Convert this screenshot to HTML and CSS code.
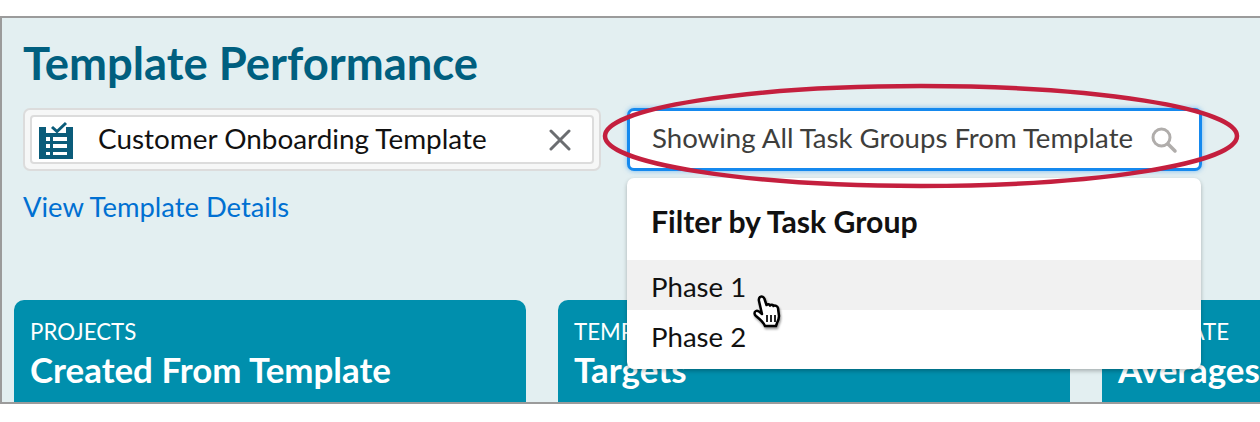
FILE: index.html
```html
<!DOCTYPE html>
<html lang="en">
<head>
<meta charset="utf-8">
<title>Template Performance</title>
<link rel="stylesheet" href="styles.css">
</head>
<body>
<div class="frame">
  <h1 class="title">Template Performance</h1>
  <div class="controls">
    <div class="left-col">
      <div class="picker-outer">
        <div class="picker">
          <svg class="tpl-icon" width="34" height="38" viewBox="0 0 34 38">
            <path fill="#0b5c7a" d="M0 6h7v6h20V6h7v32H0z"/>
            <path fill="none" stroke="#0b5c7a" stroke-width="3" d="M13 6l5 4.500L27 2"/>
            <path fill="#fff" d="M7 16h4v4H7zM14 16h14v4H14zM7 23h4v4H7zM14 23h14v4H14zM7 31h4v3H7zM14 31h14v3H14z"/>
          </svg>
          <span class="picker-text">Customer Onboarding Template</span>
          <svg class="clear-icon" width="22" height="22" viewBox="0 0 22 22">
            <path d="M2 2l18 18M20 2L2 20" stroke="#6b6d70" stroke-width="3" stroke-linecap="round"/>
          </svg>
        </div>
      </div>
      <a class="details-link">View Template Details</a>
    </div>
    <div class="search">
      <span class="search-text">Showing All Task Groups From Template</span>
      <svg class="search-icon" width="28" height="28" viewBox="0 0 28 28">
        <circle cx="11.500" cy="11.500" r="8.500" fill="none" stroke="#b0adab" stroke-width="3"/>
        <path d="M18 18l7 7" stroke="#b0adab" stroke-width="3.500" stroke-linecap="round"/>
      </svg>
    </div>
  </div>
  <div class="cards">
    <div class="card"><div class="eyebrow">PROJECTS</div><div class="card-title">Created From Template</div></div>
    <div class="card"><div class="eyebrow">TEMPLATE</div><div class="card-title">Targets</div></div>
    <div class="card"><div class="eyebrow">TEMPLATE</div><div class="card-title">Averages</div></div>
  </div>
  <div class="menu">
    <div class="menu-head">Filter by Task Group</div>
    <div class="menu-item hover">Phase 1</div>
    <div class="menu-item">Phase 2</div>
  </div>
  <svg class="ellipse" width="642" height="112" viewBox="0 0 642 112">
    <ellipse cx="321" cy="56" rx="316" ry="50" fill="none" stroke="#c41f3e" stroke-width="4.500"/>
  </svg>
  <svg class="hand" width="34" height="37" viewBox="0 0 34 37">
    <path d="M8 3c2-1 4 0 4.500 2l2 6c1-1 3-1 3.500.5 1-1 3-1 3.500.5 1.500-1 4 0 4.500 2l1 8c0 3-1 5-2 7l-1 3H13c-1-3-4-6-9-10-2-2-2-4 0-5 2-1 4 1 6 3L7 7c-.5-2 0-3 1-4z" fill="#fff" stroke="#000" stroke-width="2.500" stroke-linejoin="round"/>
    <path d="M15 21v7M19 21v7M23 21v7" stroke="#000" stroke-width="1.700"/>
  </svg>
</div>
</body>
</html>
```
FILE: styles.css
```css
* { box-sizing: border-box; }
html, body { margin: 0; padding: 0; background: #fff; }
body { font-family: Lato, "Open Sans", sans-serif; height: 422px; overflow: hidden; }
.frame {
  position: relative;
  margin-top: 16px;
  height: 388px;
  overflow: hidden;
  background: #e3eff1;
  border: 2px solid #9b9b9b;
  border-right: 0;
  padding: 22px 0 0 21px;
}
.title {
  margin: 0;
  font-size: 45.400px;
  line-height: 45px;
  font-weight: 700;
  color: #005f7f;
}
.controls {
  display: flex;
  margin-top: 23px;
  gap: 26px;
  align-items: flex-start;
}
.left-col { width: 578px; }
.picker-outer {
  height: 63px;
  padding: 5px;
  background: #f6f7f7;
  border: 2px solid #dcdcdc;
  border-radius: 7px;
}
.picker {
  display: flex;
  align-items: center;
  height: 49px;
  padding: 0 21px 0 7px;
  background: #fff;
  border: 2px solid #dcdcdc;
  border-radius: 4px;
}
.tpl-icon { flex: none; }
.picker-text { flex: 1; margin-left: 25px; font-size: 27.900px; line-height: 44px; margin-top: -3px; color: #111; white-space: nowrap; }
.clear-icon { flex: none; }
.details-link {
  display: block;
  margin-top: 19px;
  font-size: 27.400px;
  line-height: 34px;
  color: #0070d2;
}
.search {
  display: flex;
  align-items: center;
  width: 575px;
  height: 63px;
  padding: 0 21px 0 22px;
  background: #fff;
  border: 3px solid #1589ee;
  border-radius: 7px;
  box-shadow: 0 0 5px #1589ee88;
}
.search-text { flex: 1; font-size: 27.600px; line-height: 44px; margin-top: -3px; color: #3e3e3c; white-space: nowrap; }
.search-icon { flex: none; }
.cards {
  display: flex;
  gap: 32px;
  margin: 0 0 0 -9px;
  position: absolute;
  left: 21px;
  top: 282px;
}
.card {
  flex: none;
  width: 512px;
  height: 110px;
  padding: 20px 16px;
  background: #008fad;
  border-radius: 10px 10px 0 0;
  color: #fff;
}
.eyebrow { font-size: 22.300px; line-height: 24px; }
.card-title { font-size: 34.900px; line-height: 40px; font-weight: 700; margin-top: 6px; white-space: nowrap; }
.menu {
  position: absolute;
  left: 625px;
  top: 160px;
  width: 574px;
  height: 191px;
  background: #fff;
  border-radius: 7px;
  box-shadow: 0 2px 4px #00000045;
  padding-top: 25px;
}
.menu-head { font-size: 30.200px; line-height: 36px; font-weight: 700; color: #111; padding-left: 24px; height: 57px; }
.menu-item { height: 50px; line-height: 53px; font-size: 27.600px; color: #111; padding-left: 24px; }
.menu-item.hover { background: #f1f1f1; }
.ellipse { position: absolute; left: 598px; top: 62px; }
.hand { position: absolute; left: 750px; top: 276px; filter: drop-shadow(1px 2px 1px #0006); }
```
